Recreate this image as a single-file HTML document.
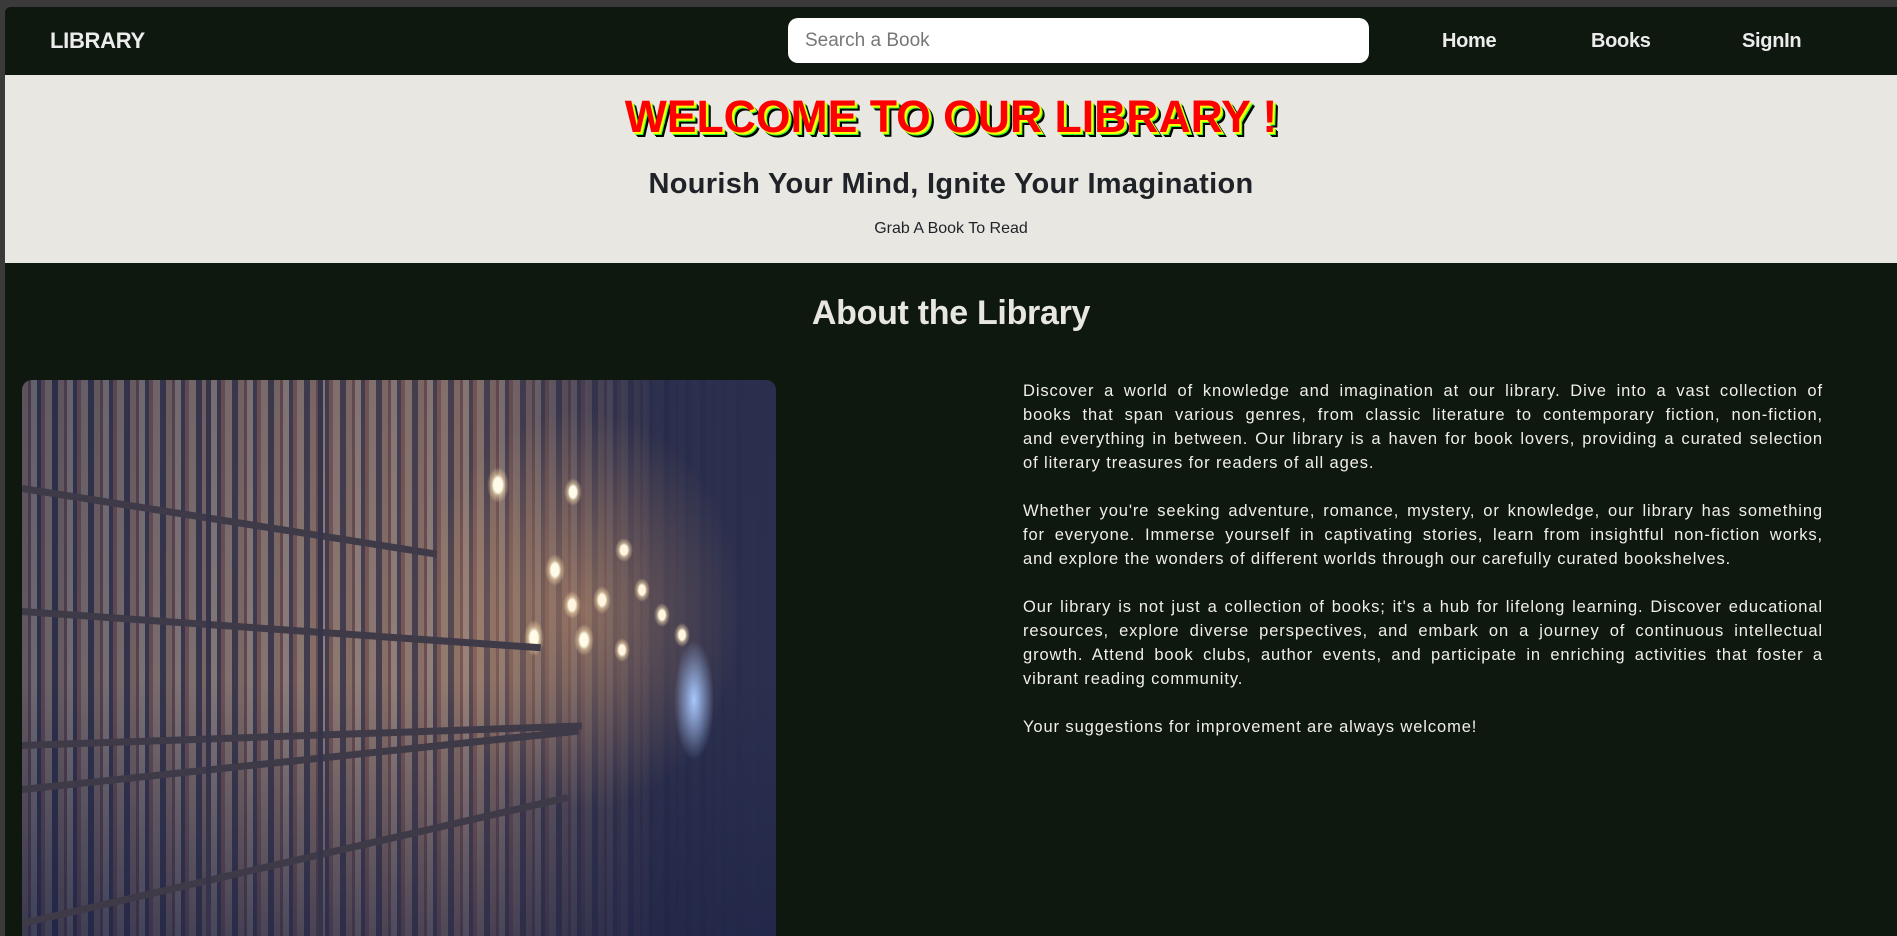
<!DOCTYPE html>
<html><head><meta charset="utf-8"><style>
*{margin:0;padding:0;box-sizing:border-box}
html,body{width:1897px;height:936px;overflow:hidden;background:#3a3a3a;font-family:"Liberation Sans",sans-serif}
.frame{position:absolute;left:5px;top:7px;right:0;bottom:0;background:#0e180f;border-top-left-radius:6px;overflow:hidden}
nav{position:absolute;left:0;top:0;right:0;height:68px;background:#0e180f}
.logo{position:absolute;left:45px;top:21px;color:#ececec;font-weight:bold;font-size:22px;letter-spacing:-0.3px}
.search{position:absolute;left:783px;top:11px;width:581px;height:45px;background:#fff;border-radius:10px;color:#777;font-size:19px;padding:12px 0 0 17px}
.nl{position:absolute;top:23px;color:#ececec;font-weight:bold;font-size:20px;letter-spacing:-0.3px}
.hero{position:absolute;left:0;right:0;top:68px;height:188px;background:#e8e7e2;text-align:center}
.t1{position:absolute;left:0;right:0;top:16px;font-size:45px;font-weight:900;color:#f00;letter-spacing:0px;transform:scaleX(0.99);text-shadow:2px 2px 0 #ff0,3px 3px 0 #3f3,4px 4px 0 #000,5px 5px 0 #000}
.t2{position:absolute;left:0;right:0;top:93px;font-size:29px;font-weight:bold;color:#1f2328;letter-spacing:0.3px}
.t3{position:absolute;left:0;right:0;top:145px;font-size:16px;color:#1f2328}
.about{position:absolute;left:0;right:0;top:287px;text-align:center;color:#e8e6e1;font-size:34px;font-weight:bold;letter-spacing:-0.3px}
.img{position:absolute;left:17px;top:373px;width:754px;height:600px;border-radius:10px;overflow:hidden;
background:
radial-gradient(ellipse 11px 18px at 476px 105px,#fffbe8 40%,rgba(255,230,180,.5) 60%,transparent 100%),
radial-gradient(ellipse 9px 14px at 551px 112px,#fffbe8 40%,rgba(255,230,180,.5) 60%,transparent 100%),
radial-gradient(ellipse 10px 16px at 533px 190px,#fffbe8 40%,rgba(255,230,180,.5) 60%,transparent 100%),
radial-gradient(ellipse 10px 18px at 512px 258px,#fffbe8 40%,rgba(255,230,180,.5) 60%,transparent 100%),
radial-gradient(ellipse 10px 16px at 562px 260px,#fffbe8 40%,rgba(255,230,180,.5) 60%,transparent 100%),
radial-gradient(ellipse 9px 14px at 550px 225px,#fff5e0 40%,rgba(255,230,180,.5) 60%,transparent 100%),
radial-gradient(ellipse 9px 14px at 580px 220px,#fff5e0 40%,rgba(255,230,180,.5) 60%,transparent 100%),
radial-gradient(ellipse 9px 12px at 602px 170px,#fff5e0 40%,rgba(255,230,180,.5) 60%,transparent 100%),
radial-gradient(ellipse 8px 12px at 620px 210px,#fff5e0 40%,rgba(255,230,180,.5) 60%,transparent 100%),
radial-gradient(ellipse 8px 12px at 640px 235px,#fff5e0 40%,rgba(255,230,180,.5) 60%,transparent 100%),
radial-gradient(ellipse 8px 12px at 660px 255px,#fff5e0 40%,rgba(255,230,180,.5) 60%,transparent 100%),
radial-gradient(ellipse 8px 12px at 600px 270px,#fff5e0 40%,rgba(255,230,180,.5) 60%,transparent 100%),
radial-gradient(ellipse 20px 60px at 672px 320px,#a8c8ff,transparent),
radial-gradient(ellipse 160px 200px at 560px 230px,rgba(220,160,110,.45),transparent),
linear-gradient(180deg,rgba(40,44,75,.35) 0%,rgba(40,44,75,.25) 50%,rgba(30,35,70,.75) 100%),
linear-gradient(90deg,rgba(40,46,75,.45) 0%,rgba(130,100,90,.35) 40%,rgba(150,110,90,.4) 60%,rgba(40,44,75,.95) 85%,#2c3150 100%),
repeating-linear-gradient(90deg,#b8957d 0 6px,#7a5048 6px 9px,#cbb8a6 9px 15px,#30324a 15px 19px,#9a6458 19px 23px,#c4ab92 23px 30px,#2e3048 30px 36px),
#3a3b55}
.shelf{position:absolute;height:7px;background:#3e3a48;transform-origin:left center}
.txt{position:absolute;left:1018px;top:372px;width:800px;color:#f0efe8;font-size:16.5px;letter-spacing:0.9px;line-height:24px}
.txt div{text-align:justify;text-align-last:justify;white-space:nowrap}
.txt div.l{text-align-last:left}
.gap{height:24px}
</style></head><body>
<div class="frame">
<nav>
<div class="logo">LIBRARY</div>
<div class="search">Search a Book</div>
<div class="nl" style="left:1437px">Home</div>
<div class="nl" style="left:1586px">Books</div>
<div class="nl" style="left:1737px">SignIn</div>
</nav>
<div class="hero">
<div class="t1">WELCOME TO OUR LIBRARY !</div>
<div class="t2">Nourish Your Mind, Ignite Your Imagination</div>
<div class="t3">Grab A Book To Read</div>
</div>
<div class="about">About the Library</div>
<div class="img">
<div class="shelf" style="left:0;top:105px;width:420px;transform:rotate(9deg)"></div>
<div class="shelf" style="left:0;top:228px;width:520px;transform:rotate(4deg)"></div>
<div class="shelf" style="left:0;top:362px;width:560px;transform:rotate(-2deg)"></div>
<div class="shelf" style="left:0;top:406px;width:560px;transform:rotate(-6deg)"></div>
<div class="shelf" style="left:0;top:540px;width:560px;transform:rotate(-13deg)"></div>
<div style="position:absolute;left:184px;top:0;width:5px;height:600px;background:#35344a"></div>
<div style="position:absolute;left:296px;top:0;width:5px;height:600px;background:#35344a"></div>
</div>
<div class="txt">
<div>Discover a world of knowledge and imagination at our library. Dive into a vast collection of</div>
<div>books that span various genres, from classic literature to contemporary fiction, non-fiction,</div>
<div>and everything in between. Our library is a haven for book lovers, providing a curated selection</div>
<div class="l">of literary treasures for readers of all ages.</div>
<div class="gap"></div>
<div>Whether you're seeking adventure, romance, mystery, or knowledge, our library has something</div>
<div>for everyone. Immerse yourself in captivating stories, learn from insightful non-fiction works,</div>
<div class="l">and explore the wonders of different worlds through our carefully curated bookshelves.</div>
<div class="gap"></div>
<div>Our library is not just a collection of books; it's a hub for lifelong learning. Discover educational</div>
<div>resources, explore diverse perspectives, and embark on a journey of continuous intellectual</div>
<div>growth. Attend book clubs, author events, and participate in enriching activities that foster a</div>
<div class="l">vibrant reading community.</div>
<div class="gap"></div>
<div class="l">Your suggestions for improvement are always welcome!</div>
</div>
</div>
</body></html>
